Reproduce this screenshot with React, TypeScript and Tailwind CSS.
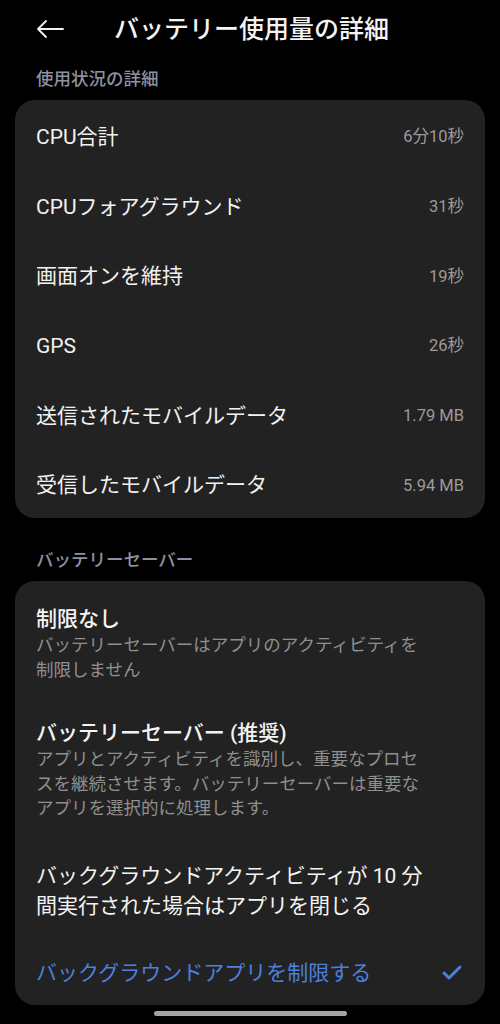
import { Check } from 'lucide-react';

const usageRows = [
  { label: 'CPU合計', value: '6分10秒' },
  { label: 'CPUフォアグラウンド', value: '31秒' },
  { label: '画面オンを維持', value: '19秒' },
  { label: 'GPS', value: '26秒' },
  { label: '送信されたモバイルデータ', value: '1.79 MB' },
  { label: '受信したモバイルデータ', value: '5.94 MB' },
];

export default function App() {
  return (
    <div
      className="w-[500px] h-[1024px] bg-black text-white overflow-hidden flex flex-col"
      style={{ fontFamily: "Roboto, 'Noto Sans CJK JP', sans-serif" }}
    >
      {/* Header */}
      <div className="h-[58px] flex items-center pl-[36px]">
        <svg width="28" height="20" viewBox="0 0 28 20" fill="none" stroke="#f2f2f2" strokeWidth="1.8" strokeLinecap="round" strokeLinejoin="round">
          <path d="M27 10H2M10 2L2 10l8 8" />
        </svg>
        <h1 className="ml-[50px] text-[25px] leading-none font-medium text-[#f4f4f4]">バッテリー使用量の詳細</h1>
      </div>

      <div className="h-[42px] pl-[36px] flex items-center text-[17.5px] font-medium text-[#8d92a2]">
        使用状況の詳細
      </div>

      {/* Usage card */}
      <div className="mx-[15px] rounded-[20px] bg-[#222222] h-[418px] flex flex-col">
        {usageRows.map((row) => (
          <div key={row.label} className="flex-1 flex items-center justify-between px-[21px] pt-[6px]">
            <span className="text-[21px] text-[#f2f2f2]">{row.label}</span>
            <span className="text-[16.5px] text-[#9b9b9b]">{row.value}</span>
          </div>
        ))}
      </div>

      <div className="h-[63px] pl-[36px] flex items-center text-[17.5px] font-medium text-[#8d92a2] pt-[22px]">
        バッテリーセーバー
      </div>

      {/* Battery saver card */}
      <div className="mx-[15px] rounded-[20px] bg-[#222222] h-[424px] px-[21px] pt-[24px]">
        <div className="text-[21px] leading-[28px] font-medium text-[#f4f4f4]">制限なし</div>
        <div className="text-[17.5px] leading-[25px] text-[#8f8f8f]">
          <div>バッテリーセーバーはアプリのアクティビティを</div>
          <div>制限しません</div>
        </div>

        <div className="mt-[36px] text-[21px] leading-[28px] font-medium text-[#f4f4f4]">バッテリーセーバー (推奨)</div>
        <div className="text-[17.5px] leading-[24.5px] text-[#8f8f8f]">
          <div>アプリとアクティビティを識別し、重要なプロセ</div>
          <div>スを継続させます。バッテリーセーバーは重要な</div>
          <div>アプリを選択的に処理します。</div>
        </div>

        <div className="mt-[40px] text-[21px] leading-[30px] text-[#f4f4f4]">
          <div>バックグラウンドアクティビティが 10 分</div>
          <div>間実行された場合はアプリを閉じる</div>
        </div>

        <div className="mt-[37px] flex items-center justify-between">
          <span className="text-[21px] leading-[30px] text-[#4c80de]">バックグラウンドアプリを制限する</span>
          <Check className="w-[24px] h-[24px] text-[#4c80de]" strokeWidth={3} />
        </div>
      </div>

      {/* Home indicator */}
      <div className="flex justify-center mt-[6px]">
        <div className="w-[193px] h-[5px] rounded-full bg-[#a3a3a3]" />
      </div>
    </div>
  );
}
